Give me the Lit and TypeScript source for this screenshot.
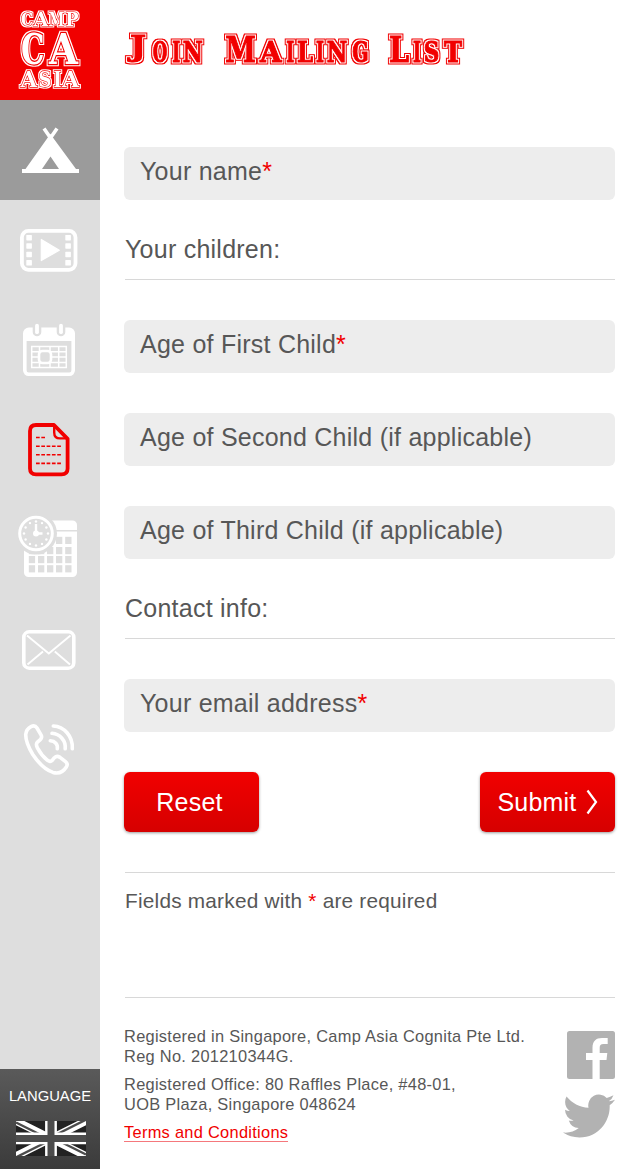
import { LitElement, html, svg, css } from "lit";
import { customElement } from "lit/decorators.js";

// A glyph in the varsity lettering: character, left edge, width, font size, baseline shift.
type Glyph = [string, number, number, number, number?];

const TITLE: Glyph[] = [
  ["J", 6, 16, 28, -5.4], ["o", 28.7, 14.6, 27], ["i", 48.2, 8, 27], ["n", 58.8, 20, 27], [" ", 82, 10, 27],
  ["M", 101.3, 30.6, 35], ["a", 136, 21.5, 27], ["i", 162.2, 8, 27], ["l", 173, 16, 27], ["i", 192, 8, 27],
  ["n", 202.7, 20.5, 27], ["g", 228.3, 16.4, 27], [" ", 250, 10, 27],
  ["L", 265, 20, 35], ["i", 289, 8, 27], ["s", 299.8, 15.6, 27], ["t", 320, 18, 27],
];
const CAMP: Glyph[] = [["C", 21, 12, 17.6], ["A", 33.5, 14.8, 17.6], ["M", 48.6, 16, 17.6], ["P", 65.5, 13, 17.6]];
const CA: Glyph[] = [["C", 21, 23.5, 43], ["A", 49, 29, 43]];
const ASIA: Glyph[] = [["A", 20.5, 16.5, 22], ["S", 38.5, 13, 22], ["I", 53.5, 8, 22], ["A", 62, 17, 22]];

const letters = (glyphs: Glyph[], y: number) =>
  glyphs.map(
    ([c, x, w, s, dy = 0]) =>
      svg`<tspan x=${x} y=${y + dy} font-size=${s} textLength=${w} lengthAdjust="spacingAndGlyphs">${c.toUpperCase()}</tspan>`
  );

const range = (n: number) => Array.from({ length: n }, (_, i) => i);

const tent = svg`
  <path d="M44 28.5L54 43M57 28.5L47 43" stroke="#fff" stroke-width="3.6"/>
  <path fill="#fff" fill-rule="evenodd" d="M50.3 34L76 69H79V73H22V69H25.5ZM50.5 56.5L42 69H59Z"/>`;

const video = svg`
  <rect x="21.9" y="30.9" width="53.6" height="38.9" rx="6.5" fill="none" stroke="#fff" stroke-width="3.8"/>
  ${[26.3, 65.3].map((x) => [35, 43.3, 51.8, 60.1].map((y) => svg`<rect x=${x} y=${y} width="5.6" height="5.4" rx=".6" fill="#fff"/>`))}
  <path d="M41.3 39.5V60.6L59.3 50.2Z" fill="#fff" stroke="#fff" stroke-width="1.2" stroke-linejoin="round"/>`;

const calendar = svg`
  <rect x="24.8" y="29.3" width="48.4" height="45" rx="4" fill="none" stroke="#fff" stroke-width="3.6"/>
  <path d="M25 30H73V41H25Z" fill="#fff"/>
  ${[37, 61].map((x) => svg`
    <path d="M${x} 24V32" stroke="#dedede" stroke-width="8.6" stroke-linecap="round"/>
    <path d="M${x} 25.6V32.2" stroke="#fff" stroke-width="3.8" stroke-linecap="round"/>`)}
  <path d="M31.7 46.4H66.3V67.6H31.7ZM31.7 51.8H66.3M31.7 57H66.3M31.7 62.6H66.3M39.5 46V68M50 46V68M58.7 46V68" fill="none" stroke="#fff" stroke-width="1.5"/>
  <rect x="39" y="51" width="12" height="12" rx="3.5" fill="#dedede" stroke="#fff" stroke-width="2.6"/>`;

const form = svg`
  <g fill="none" stroke="#f10000">
    <path d="M54 25H36Q30 25 30 31V68.5Q30 74.3 36 74.3H61.5Q67.6 74.3 67.6 68.5V38.8Z" stroke-width="3.8" stroke-linejoin="round"/>
    <path d="M54.2 26V32.5Q54.2 38.4 60 38.4H67" stroke-width="2.4"/>
    <path d="M36 37.5H45.5M36 46.2H61.3M36 54.8H61.3M36 63.4H61.3" stroke-width="1.6" stroke-dasharray="3.7 1.6"/>
  </g>`;

const schedule = svg`
  <rect x="24" y="20.5" width="53" height="56.5" rx="4.5" fill="#fff"/>
  <path d="M24 30.8H77" stroke="#dedede" stroke-width="1.6"/>
  ${[36.8, 47, 56, 65.2].map((y, r) => [28.8, 38, 47, 56, 65.2].map((x, c) =>
    r === 0 && c < 3 ? null : svg`<rect x=${x} y=${y} width="6.3" height="7.2" fill="#dedede"/>`))}
  <circle cx="36" cy="33.5" r="21" fill="#dedede"/>
  <circle cx="36" cy="33.5" r="16.3" fill="none" stroke="#fff" stroke-width="3"/>
  ${range(12).map((i) => {
    const a = (i * Math.PI) / 6;
    return svg`<circle cx=${36 + 12 * Math.cos(a)} cy=${33.5 + 12 * Math.sin(a)} r="1.2" fill="#fff"/>`;
  })}
  <path d="M36 24V33.5H42.5" fill="none" stroke="#fff" stroke-width="2.4"/>
  <circle cx="36" cy="33.5" r="3" fill="#fff"/>`;

const mail = svg`
  <g fill="none" stroke="#fff">
    <rect x="23.8" y="31.8" width="50" height="36.4" rx="5.5" stroke-width="3.6"/>
    <path d="M27 35.5L48.8 53.6L70.5 35.5M27.5 64.5L43 51.5M70 64.5L54.8 51.5" stroke-width="1.9"/>
  </g>`;

const phone = svg`
  <g fill="none" stroke="#fff" stroke-width="3.6" stroke-linecap="round" stroke-linejoin="round">
    <path d="M31 26.6Q34.8 24.6 37 28L41 34.8Q42.5 37.5 40.3 39.6L37.2 42.4Q35.6 44.4 37.4 47.8Q41.5 55.5 47.5 60.3Q50.3 62.4 52.4 60.2L54.4 57.7Q56.8 55.4 60 57.4L65.5 61.7Q68.3 64 66.3 67Q61.5 74.8 53 72.4Q42.3 68.8 32.8 54.5Q25.6 42.5 25.7 34.5Q26.3 29 31 26.6Z"/>
    <path d="M53.3 26C64 26.5 73 36 72.3 48.8M52 33.3C60 34 66 40.5 65.2 48.8M50.3 40.8C55 41 58 44.3 57.3 48.8"/>
  </g>`;

const NAV = [
  { name: "home", icon: tent },
  { name: "videos", icon: video },
  { name: "dates", icon: calendar },
  { name: "form", icon: form },
  { name: "schedule", icon: schedule },
  { name: "mail", icon: mail },
  { name: "phone", icon: phone },
];

@customElement("camp-sidebar")
class CampSidebar extends LitElement {
  static styles = css`
    :host { display: flex; flex-direction: column; background: #dedede; }
    svg { display: block; }
    .varsity { font-family: "DejaVu Serif", serif; font-weight: bold; fill: #fff; stroke: #f10000; paint-order: stroke; }
    .logo { background: #f10000; height: 100px; }
    .item { height: 100px; }
    .home { background: #9b9b9b; }
    .spacer { flex: 1; }
    .language {
      height: 100px; box-sizing: border-box; padding: 17px 0 0;
      display: flex; flex-direction: column; align-items: center;
      background: linear-gradient(#5a5a5a, #3b3b3b);
      color: #fff; font: 14.8px/20px "Liberation Sans", Arial, sans-serif;
    }
    .flag { margin: 15px 0 0 1px; }
  `;
  render() {
    return html`
      <div class="logo">
        <svg width="100" height="100" viewBox="0 0 100 100">
          <filter id="edge" x="-10%" y="-20%" width="120%" height="140%" color-interpolation-filters="sRGB">
            <feMorphology in="SourceAlpha" operator="dilate" radius="1" result="wide"/>
            <feFlood flood-color="#fff"/>
            <feComposite in2="wide" operator="in"/>
            <feMerge><feMergeNode/><feMergeNode in="SourceGraphic"/></feMerge>
          </filter>
          <text class="varsity" stroke-width="1.2" filter="url(#edge)">${letters(CAMP, 25.8)}</text>
          <text class="varsity" stroke-width="2.4" filter="url(#edge)">${letters(CA, 63.5)}</text>
          <text class="varsity" stroke-width="1.3" filter="url(#edge)">${letters(ASIA, 87.2)}</text>
        </svg>
      </div>
      ${NAV.map((n) => html`<div class="item ${n.name}"><svg width="100" height="100" viewBox="0 0 100 100">${n.icon}</svg></div>`)}
      <div class="spacer"></div>
      <div class="language">
        <span>LANGUAGE</span>
        <svg class="flag" width="70" height="35" viewBox="0 0 70 35">
          <rect width="70" height="35" fill="#222"/>
          <path d="M0 0L70 35M70 0L0 35" stroke="#fff" stroke-width="7.5"/>
          <path d="M0 1.5L35 19M70 33.5L35 16M70 -1.3L35 16.2M0 36.3L35 18.8" stroke="#4b4b4b" stroke-width="2.4"/>
          <path d="M35 0V35M0 17.4H70" stroke="#fff" stroke-width="11.8"/>
          <path d="M35 0V35M0 17.4H70" stroke="#4c4c4c" stroke-width="7"/>
        </svg>
      </div>`;
  }
}

@customElement("app-root")
class AppRoot extends LitElement {
  static styles = css`
    :host {
      display: grid; grid-template-columns: 100px 1fr; height: 1169px; background: #fff;
      font-family: "Liberation Sans", Arial, sans-serif; color: #575757;
    }
    svg { display: block; }
    main { padding: 25px 25px 0 24px; }
    .varsity { font-family: "DejaVu Serif", serif; font-weight: bold; fill: #f10000; stroke: #f10000; stroke-width: 1; }
    h1 { margin: 0 0 72px; height: 50px; }
    form { display: flex; flex-direction: column; gap: 40px; }
    .field, .section { font-size: 25px; white-space: nowrap; letter-spacing: 0.24px; }
    .field { height: 53px; box-sizing: border-box; padding: 9px 16px; line-height: 30px; background: #ededed; border-radius: 6px; }
    .section { height: 80px; margin: -40px 0 0 1px; box-sizing: border-box; padding-top: 34px; line-height: 30px; border-bottom: 1px solid #d8d8d8; }
    .star { color: #f10000; }
    .actions { display: flex; justify-content: space-between; }
    button {
      width: 135px; height: 60px; padding: 0; border: 0; border-radius: 6px;
      display: flex; align-items: center; justify-content: center; gap: 9px;
      background: linear-gradient(#f10000, #d60000); box-shadow: 0 1px 3px rgba(0, 0, 0, 0.4);
      color: #fff; font: 25px/30px "Liberation Sans", Arial, sans-serif; letter-spacing: 0.2px;
    }
    .reset { padding-right: 4px; }
    .note { height: 108px; margin-left: 1px; border: solid #d8d8d8; border-width: 1px 0; padding-top: 16px; font-size: 20.8px; line-height: 24px; letter-spacing: 0.22px; }
    footer { display: flex; justify-content: space-between; padding-top: 28px; font-size: 16.4px; line-height: 20px; letter-spacing: 0.29px; white-space: nowrap; }
    p { margin: 0 0 8px; }
    .terms { display: inline-block; color: #f10000; line-height: 20px; height: 19px; border-bottom: 1px solid #f5787c; }
    .social { display: flex; flex-direction: column; align-items: flex-end; gap: 15px; padding-top: 5px; }
  `;
  render() {
    const star = html`<span class="star">*</span>`;
    return html`
      <camp-sidebar></camp-sidebar>
      <main>
        <h1>
          <svg width="360" height="50" viewBox="0 0 360 50">
            <filter id="edge" x="-5%" y="-20%" width="110%" height="140%" color-interpolation-filters="sRGB">
              <feMorphology in="SourceAlpha" operator="dilate" radius="2" result="wide"/>
              <feMorphology in="SourceAlpha" operator="dilate" radius="1" result="near"/>
              <feFlood flood-color="#f10000"/>
              <feComposite in2="wide" operator="in" result="outline"/>
              <feFlood flood-color="#fff"/>
              <feComposite in2="near" operator="in" result="gap"/>
              <feMerge><feMergeNode in="outline"/><feMergeNode in="gap"/><feMergeNode in="SourceGraphic"/></feMerge>
            </filter>
            <text class="varsity" filter="url(#edge)">${letters(TITLE, 36.5)}</text>
          </svg>
        </h1>
        <form>
          <div class="field">Your name${star}</div>
          <div class="section">Your children:</div>
          <div class="field">Age of First Child${star}</div>
          <div class="field">Age of Second Child (if applicable)</div>
          <div class="field">Age of Third Child (if applicable)</div>
          <div class="section">Contact info:</div>
          <div class="field">Your email address${star}</div>
          <div class="actions">
            <button class="reset" type="button">Reset</button>
            <button type="button">Submit
              <svg width="12" height="26" viewBox="0 0 12 26"><path d="M1.5 1.5L10 13L1.5 24.5" fill="none" stroke="#fff" stroke-width="2.2"/></svg>
            </button>
          </div>
          <div class="note">Fields marked with ${star} are required</div>
        </form>
        <footer>
          <div>
            <p>Registered in Singapore, Camp Asia Cognita Pte Ltd.<br />Reg No. 201210344G.</p>
            <p>Registered Office: 80 Raffles Place, #48-01,<br />UOB Plaza, Singapore 048624</p>
            <span class="terms">Terms and Conditions</span>
          </div>
          <div class="social">
            <svg width="48" height="48" viewBox="0 0 48 48">
              <rect width="48" height="48" rx="2.5" fill="#b2b2b2"/>
              <path fill="#fff" d="M25.5 48V29H19V22H25.5V17C25.5 10 29 7 35 7H40.7V13H36.5C33.5 13 32.7 14.5 32.7 17V22H40.3L39.5 29H32.7V48Z"/>
            </svg>
            <svg width="52" height="44" viewBox="0 2 24 20" preserveAspectRatio="none">
              <path fill="#b2b2b2" d="M23.953 4.57a10 10 0 01-2.825.775 4.958 4.958 0 002.163-2.723c-.951.555-2.005.959-3.127 1.184a4.92 4.92 0 00-8.384 4.482C7.69 8.095 4.067 6.13 1.64 3.162a4.822 4.822 0 00-.666 2.475c0 1.71.87 3.213 2.188 4.096a4.904 4.904 0 01-2.228-.616v.06a4.923 4.923 0 003.946 4.827 4.996 4.996 0 01-2.212.085 4.936 4.936 0 004.604 3.417 9.867 9.867 0 01-6.102 2.105c-.39 0-.779-.023-1.17-.067a13.995 13.995 0 007.557 2.209c9.053 0 13.998-7.496 13.998-13.985 0-.21 0-.42-.015-.63A9.935 9.935 0 0024 4.59z"/>
            </svg>
          </div>
        </footer>
      </main>`;
  }
}
